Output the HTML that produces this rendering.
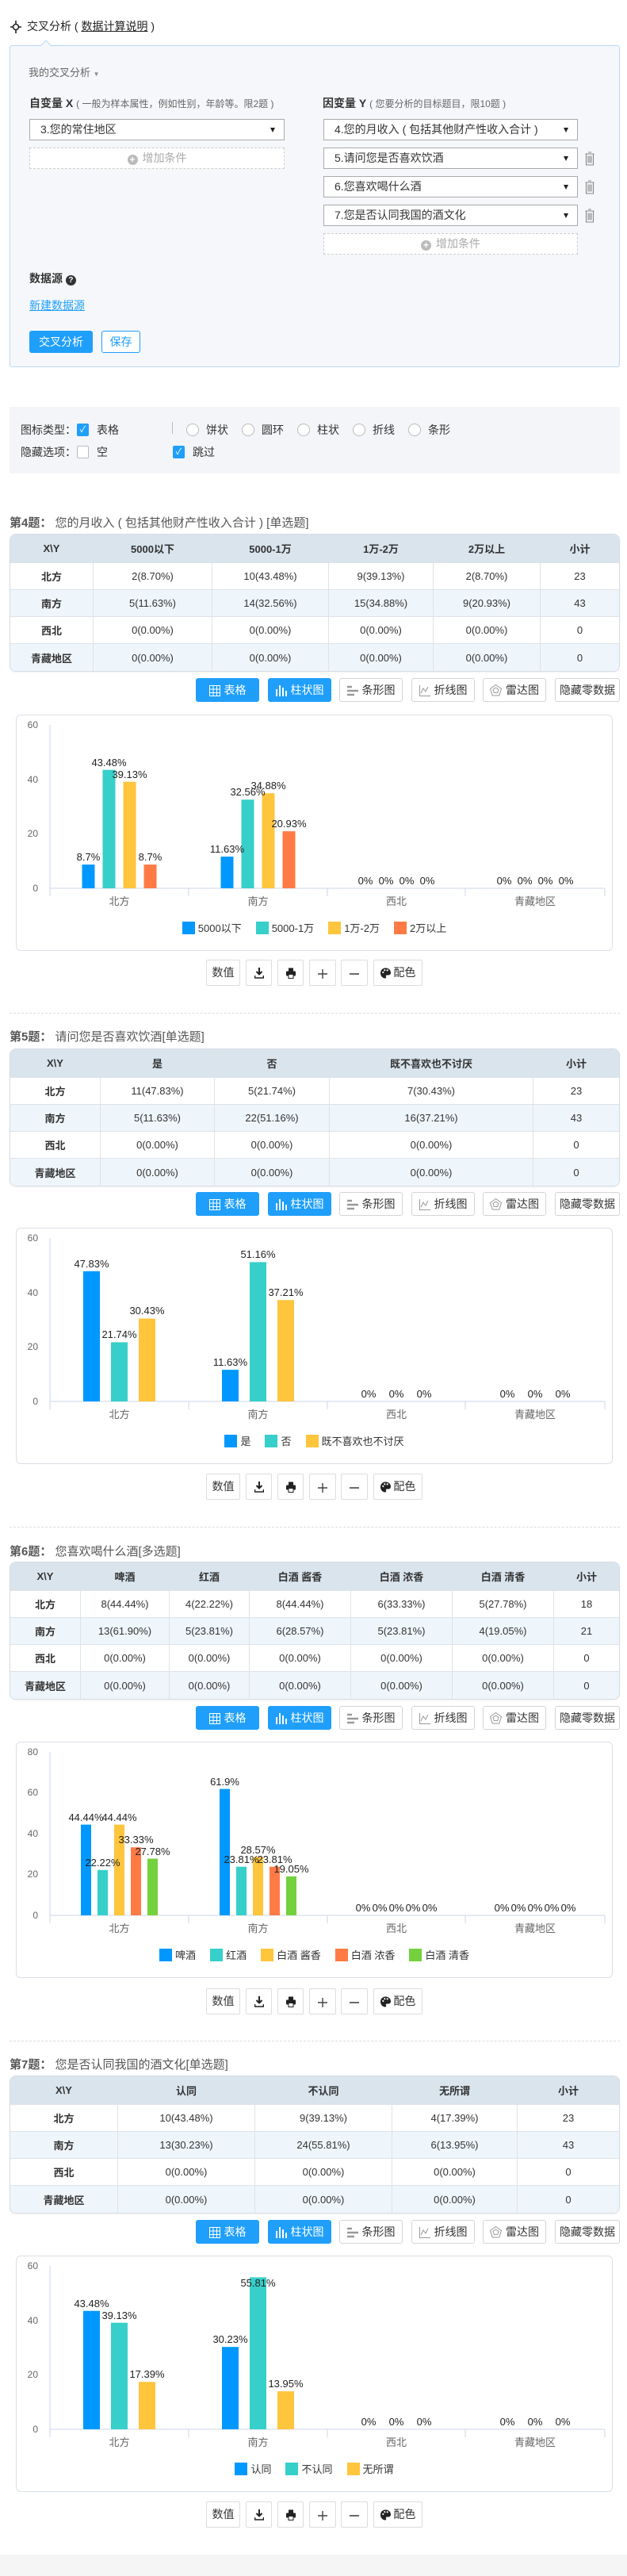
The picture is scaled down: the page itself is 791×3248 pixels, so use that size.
<!DOCTYPE html>
<html><head><meta charset="utf-8">
<style>
*{box-sizing:border-box;margin:0;padding:0}
body{width:791px;height:3248px;position:relative;background:#fff;font-family:"Liberation Sans","Noto Sans CJK SC",sans-serif;color:#333;overflow:hidden}
.a{position:absolute}
.lbl{font-size:14px;line-height:20px;white-space:nowrap}
.sel{position:absolute;height:27px;background:#fff;border:1px solid #aaa;font-size:14px;line-height:25px;padding-left:13px;color:#333}
.sel:after{content:"";position:absolute;right:11px;top:10px;border-left:3px solid transparent;border-right:3px solid transparent;border-top:6px solid #222}
.add{position:absolute;height:27px;border:1px dashed #ccc;background:#fff;color:#aaa;font-size:14px;line-height:25px;text-align:center}
.add i{display:inline-block;width:13px;height:13px;border-radius:50%;background:#bbb;color:#fff;font-style:normal;font-size:12px;line-height:13px;vertical-align:-1px;margin-right:6px;font-weight:bold}
.trash{position:absolute;width:12px;height:18px}
.qt{position:absolute;left:12px;font-size:15px;line-height:20px;color:#555;white-space:nowrap}
.qt b{color:#555}
table.t{position:absolute;left:12px;width:770px;border-collapse:separate;border-spacing:0;border:1px solid #d6dde4;border-radius:8px;overflow:hidden;font-size:13px;table-layout:fixed;box-shadow:0 1px 2px rgba(0,0,0,.06)}
table.t td,table.t th{text-align:center;border-right:1px solid #dde3e9;border-bottom:1px solid #dde3e9;color:#333;white-space:nowrap}
table.t th{height:36px;background:#d9e4ed;font-weight:bold}
table.t td{height:34px;background:#fff}
table.t tr:nth-child(3) td,table.t tr:nth-child(5) td{background:#eef5fb}
table.t td:first-child{font-weight:bold}
table.t tr td:last-child,table.t tr th:last-child{border-right:none}
table.t tr:last-child td{border-bottom:none}
.vb{position:absolute;height:30px;width:80px;border-radius:3px;font-size:14px;line-height:28px;text-align:center;border:1px solid #d4d4d4;background:#fff;color:#333;white-space:nowrap}
.vb.on{background:#1f9ffa;border-color:#1f9ffa;color:#fff}
.vb svg{vertical-align:-3px;margin-right:5px}
.cb{position:absolute;left:20px;width:753px;height:298px;border:1px solid #dcdfe6;border-radius:6px;background:#fff}
.cb svg{position:absolute;left:0;top:0}
.lg{position:absolute;left:0;right:0;top:258px;text-align:center;font-size:13px;color:#333;white-space:nowrap}
.lg span{display:inline-block;margin:0 9px}
.lg i{display:inline-block;width:16px;height:16px;vertical-align:-3px;margin-right:4px}
.tb{position:absolute;height:33px;border:1px solid #ddd;border-radius:2px;background:#fff;font-size:14px;line-height:31px;text-align:center;color:#333}
.tb svg{vertical-align:-3px}
.sep{position:absolute;left:12px;width:770px;border-top:1px dashed #dcdcdc}
</style></head><body>

<svg class="a" style="left:12px;top:25px" width="16" height="18" viewBox="0 0 16 18"><circle cx="8" cy="9" r="3.5" fill="none" stroke="#222" stroke-width="1.6"/><path d="M8 1v4.5M8 12.5V17M1 9h3.5M11.5 9H15" stroke="#222" stroke-width="1.6"/></svg>
<div class="a lbl" style="left:34px;top:23px;font-size:14px;color:#222">交叉分析 ( <u>数据计算说明</u> )</div>

<div class="a" style="left:12px;top:57px;width:770px;height:406px;background:#f5f7fa;border:1px solid #bcd8f5;border-radius:3px"></div>
<svg class="a" style="left:51px;top:50px" width="14" height="8"><path d="M0 8L7 1L14 8" fill="#f5f7fa" stroke="#bcd8f5"/></svg>
<div class="a lbl" style="left:36px;top:82px;font-size:13px;color:#666">我的交叉分析 <span style="font-size:8px;color:#888">▼</span></div>
<div class="a lbl" style="left:37px;top:120px"><b>自变量 X</b> <span style="font-size:12px;color:#666">( 一般为样本属性，例如性别，年龄等。限2题 )</span></div>
<div class="a lbl" style="left:407px;top:120px"><b>因变量 Y</b> <span style="font-size:12px;color:#666">( 您要分析的目标题目，限10题 )</span></div>
<div class="sel" style="left:37px;top:150px;width:322px">3.您的常住地区</div>
<div class="add" style="left:37px;top:186px;width:322px"><i>+</i>增加条件</div>
<div class="sel" style="left:408px;top:150px;width:321px">4.您的月收入 ( 包括其他财产性收入合计 )</div>
<div class="sel" style="left:408px;top:186px;width:321px">5.请问您是否喜欢饮酒</div>
<div class="sel" style="left:408px;top:222px;width:321px">6.您喜欢喝什么酒</div>
<div class="sel" style="left:408px;top:258px;width:321px">7.您是否认同我国的酒文化</div>
<div class="add" style="left:408px;top:294px;width:321px"><i>+</i>增加条件</div>
<svg class="trash" style="left:738px;top:191px" viewBox="0 0 12 18"><path d="M4 1h4M0.5 3h11M1.5 3v14h9V3M4 5.5v9M6 5.5v9M8 5.5v9" fill="none" stroke="#888" stroke-width="1.1"/></svg>
<svg class="trash" style="left:738px;top:227px" viewBox="0 0 12 18"><path d="M4 1h4M0.5 3h11M1.5 3v14h9V3M4 5.5v9M6 5.5v9M8 5.5v9" fill="none" stroke="#888" stroke-width="1.1"/></svg>
<svg class="trash" style="left:738px;top:263px" viewBox="0 0 12 18"><path d="M4 1h4M0.5 3h11M1.5 3v14h9V3M4 5.5v9M6 5.5v9M8 5.5v9" fill="none" stroke="#888" stroke-width="1.1"/></svg>
<div class="a lbl" style="left:37px;top:341px;font-weight:bold">数据源 <span style="display:inline-block;width:13px;height:13px;border-radius:50%;background:#333;color:#fff;font-size:10px;line-height:13px;text-align:center;vertical-align:0">?</span></div>
<div class="a lbl" style="left:37px;top:375px;color:#1e9fff;text-decoration:underline">新建数据源</div>
<div class="a" style="left:37px;top:417px;width:80px;height:28px;background:#1f9ffa;border-radius:3px;color:#fff;font-size:14px;line-height:28px;text-align:center">交叉分析</div>
<div class="a" style="left:128px;top:417px;width:49px;height:28px;background:#fff;border:1px solid #1f9ffa;border-radius:3px;color:#1f9ffa;font-size:14px;line-height:26px;text-align:center">保存</div>

<div class="a" style="left:12px;top:513px;width:770px;height:84px;background:#f4f5f8"></div>
<div class="a lbl" style="left:26px;top:532px">图标类型：</div>
<div class="a" style="left:97px;top:534px;width:15px;height:16px;background:#1f9ffa;border-radius:2px;color:#fff;font-size:11px;line-height:16px;text-align:center">✓</div>
<div class="a lbl" style="left:122px;top:532px">表格</div>
<div class="a" style="left:217px;top:532px;width:1px;height:15px;background:#bbb"></div>
<div class="a" style="left:235px;top:534px;width:16px;height:16px;border:1px solid #bbb;border-radius:50%;background:#fff"></div><div class="a lbl" style="left:260px;top:532px">饼状</div>
<div class="a" style="left:305px;top:534px;width:16px;height:16px;border:1px solid #bbb;border-radius:50%;background:#fff"></div><div class="a lbl" style="left:330px;top:532px">圆环</div>
<div class="a" style="left:375px;top:534px;width:16px;height:16px;border:1px solid #bbb;border-radius:50%;background:#fff"></div><div class="a lbl" style="left:400px;top:532px">柱状</div>
<div class="a" style="left:445px;top:534px;width:16px;height:16px;border:1px solid #bbb;border-radius:50%;background:#fff"></div><div class="a lbl" style="left:470px;top:532px">折线</div>
<div class="a" style="left:515px;top:534px;width:16px;height:16px;border:1px solid #bbb;border-radius:50%;background:#fff"></div><div class="a lbl" style="left:540px;top:532px">条形</div>
<div class="a lbl" style="left:26px;top:560px">隐藏选项：</div>
<div class="a" style="left:97px;top:562px;width:15px;height:16px;border:1px solid #bbb;border-radius:2px;background:#fff"></div>
<div class="a lbl" style="left:122px;top:560px">空</div>
<div class="a" style="left:218px;top:562px;width:15px;height:16px;background:#1f9ffa;border-radius:2px;color:#fff;font-size:11px;line-height:16px;text-align:center">✓</div>
<div class="a lbl" style="left:243px;top:560px">跳过</div>

<!-- Q4 -->
<div class="qt" style="top:650px"><b>第4题：</b> 您的月收入 ( 包括其他财产性收入合计 ) [单选题]</div>
<table class="t" style="top:673px">
<colgroup><col style="width:105px"><col style="width:150px"><col style="width:147px"><col style="width:132px"><col style="width:135px"><col></colgroup>
<tr><th>X\Y</th><th>5000以下</th><th>5000-1万</th><th>1万-2万</th><th>2万以上</th><th>小计</th></tr>
<tr><td>北方</td><td>2(8.70%)</td><td>10(43.48%)</td><td>9(39.13%)</td><td>2(8.70%)</td><td>23</td></tr>
<tr><td>南方</td><td>5(11.63%)</td><td>14(32.56%)</td><td>15(34.88%)</td><td>9(20.93%)</td><td>43</td></tr>
<tr><td>西北</td><td>0(0.00%)</td><td>0(0.00%)</td><td>0(0.00%)</td><td>0(0.00%)</td><td>0</td></tr>
<tr><td>青藏地区</td><td>0(0.00%)</td><td>0(0.00%)</td><td>0(0.00%)</td><td>0(0.00%)</td><td>0</td></tr>
</table>
<div class="vb on" style="left:247px;top:855px"><svg width="14" height="14" viewBox="0 0 14 14"><path d="M0.5 0.5h13v13H0.5zM0.5 5h13M0.5 9.5h13M5 0.5v13M9.5 0.5v13" fill="none" stroke="#fff"/></svg>表格</div>
<div class="vb on" style="left:338px;top:855px"><svg width="14" height="16" viewBox="0 0 14 16"><path d="M1 7v9M5 2v14M9 5v11M13 9v7" stroke="#fff" stroke-width="2"/></svg>柱状图</div>
<div class="vb" style="left:428px;top:855px"><svg width="14" height="14" viewBox="0 0 14 14"><path d="M0 2h6M0 7h14M0 12h9" stroke="#999" stroke-width="2.5"/></svg>条形图</div>
<div class="vb" style="left:519px;top:855px"><svg width="14" height="14" viewBox="0 0 14 14"><path d="M0.5 0v13.5H14M2 10l3-6 3 4 3-6" fill="none" stroke="#999"/></svg>折线图</div>
<div class="vb" style="left:609px;top:855px"><svg width="15" height="15" viewBox="0 0 15 15"><path d="M7.5 0.5l7 5-2.7 8.5H3.2L0.5 5.5zM7.5 4l3.5 2.5-1.3 4H5.3L4 6.5z" fill="none" stroke="#999"/></svg>雷达图</div>
<div class="vb" style="left:700px;top:855px;width:82px">隐藏零数据</div>

<div class="cb" style="top:901px">
<svg width="753" height="298" font-family="Liberation Sans, Noto Sans CJK SC, sans-serif">
<g font-size="12" fill="#666" text-anchor="end"><text x="27" y="222">0</text><text x="27" y="153">20</text><text x="27" y="85">40</text><text x="27" y="16">60</text></g>
<path d="M42 12V218M42 218H742M42 218v10M217 218v10M392 218v10M566 218v10M742 218v10" stroke="#ccd6eb" fill="none"/>
<g fill="#0098ff"><rect x="82.5" y="188.1" width="16" height="29.9"/><rect x="257.5" y="178.1" width="16" height="39.9"/></g>
<g fill="#36cfc9"><rect x="108.5" y="68.7" width="16" height="149.3"/><rect x="283.5" y="106.2" width="16" height="111.8"/></g>
<g fill="#ffc53d"><rect x="134.5" y="83.7" width="16" height="134.3"/><rect x="309.5" y="98.2" width="16" height="119.8"/></g>
<g fill="#ff7a45"><rect x="160.5" y="188.1" width="16" height="29.9"/><rect x="335.5" y="146.1" width="16" height="71.9"/></g>
<g font-size="13" fill="#222" text-anchor="middle">
<text x="90.5" y="183">8.7%</text><text x="116.5" y="64">43.48%</text><text x="142.5" y="79">39.13%</text><text x="168.5" y="183">8.7%</text>
<text x="265.5" y="173">11.63%</text><text x="291.5" y="101">32.56%</text><text x="317.5" y="93">34.88%</text><text x="343.5" y="141">20.93%</text>
<text x="440" y="213">0%</text><text x="466" y="213">0%</text><text x="492" y="213">0%</text><text x="518" y="213">0%</text>
<text x="615" y="213">0%</text><text x="641" y="213">0%</text><text x="667" y="213">0%</text><text x="693" y="213">0%</text></g>
<g font-size="13" fill="#666" text-anchor="middle"><text x="129.5" y="239">北方</text><text x="304.5" y="239">南方</text><text x="479" y="239">西北</text><text x="654" y="239">青藏地区</text></g>
</svg>
<div class="lg"><span><i style="background:#0098ff"></i>5000以下</span><span><i style="background:#36cfc9"></i>5000-1万</span><span><i style="background:#ffc53d"></i>1万-2万</span><span><i style="background:#ff7a45"></i>2万以上</span></div>
</div>
<div class="tb" style="left:260px;top:1210px;width:43px">数值</div>
<div class="tb" style="left:310px;top:1210px;width:33px"><svg width="12" height="14" viewBox="0 0 12 14"><path d="M6 0v8M2.5 5L6 8.5 9.5 5" fill="none" stroke="#222" stroke-width="2"/><path d="M0.5 10v3h11v-3" fill="none" stroke="#222" stroke-width="1.6"/></svg></div>
<div class="tb" style="left:350px;top:1210px;width:33px"><svg width="12" height="14" viewBox="0 0 12 14"><rect x="3" y="0.5" width="6" height="4" fill="#222"/><rect x="0" y="4.5" width="12" height="6" rx="1" fill="#222"/><rect x="3" y="8.5" width="6" height="5" fill="#fff" stroke="#222"/></svg></div>
<div class="tb" style="left:390px;top:1210px;width:34px"><svg width="12" height="12"><path d="M6 0v12M0 6h12" stroke="#444" stroke-width="1.4"/></svg></div>
<div class="tb" style="left:430px;top:1210px;width:34px"><svg width="12" height="12"><path d="M0 6h12" stroke="#444" stroke-width="1.6"/></svg></div>
<div class="tb" style="left:471px;top:1210px;width:62px"><svg width="13" height="14" viewBox="0 0 13 14"><path d="M6.5 0.5C2.5 0.5 0 3.5 0 7s2.7 6.5 6 6.5c1.2 0 1.5-1 1-2-.6-1.2.2-2 1.5-2H10c1.8 0 3-1.2 3-3C13 3 10.3 0.5 6.5 0.5z" fill="#222"/><circle cx="3.3" cy="6" r="1.1" fill="#fff"/><circle cx="5.3" cy="3.2" r="1.1" fill="#fff"/><circle cx="8.7" cy="3.4" r="1.1" fill="#fff"/></svg> 配色</div>
<div class="sep" style="top:1277px"></div>

<!-- Q5 -->
<div class="qt" style="top:1298px"><b>第5题：</b> 请问您是否喜欢饮酒[单选题]</div>
<table class="t" style="top:1322px">
<colgroup><col style="width:114px"><col style="width:144px"><col style="width:145px"><col style="width:257px"><col></colgroup>
<tr><th>X\Y</th><th>是</th><th>否</th><th>既不喜欢也不讨厌</th><th>小计</th></tr>
<tr><td>北方</td><td>11(47.83%)</td><td>5(21.74%)</td><td>7(30.43%)</td><td>23</td></tr>
<tr><td>南方</td><td>5(11.63%)</td><td>22(51.16%)</td><td>16(37.21%)</td><td>43</td></tr>
<tr><td>西北</td><td>0(0.00%)</td><td>0(0.00%)</td><td>0(0.00%)</td><td>0</td></tr>
<tr><td>青藏地区</td><td>0(0.00%)</td><td>0(0.00%)</td><td>0(0.00%)</td><td>0</td></tr>
</table>
<div class="vb on" style="left:247px;top:1503px"><svg width="14" height="14" viewBox="0 0 14 14"><path d="M0.5 0.5h13v13H0.5zM0.5 5h13M0.5 9.5h13M5 0.5v13M9.5 0.5v13" fill="none" stroke="#fff"/></svg>表格</div>
<div class="vb on" style="left:338px;top:1503px"><svg width="14" height="16" viewBox="0 0 14 16"><path d="M1 7v9M5 2v14M9 5v11M13 9v7" stroke="#fff" stroke-width="2"/></svg>柱状图</div>
<div class="vb" style="left:428px;top:1503px"><svg width="14" height="14" viewBox="0 0 14 14"><path d="M0 2h6M0 7h14M0 12h9" stroke="#999" stroke-width="2.5"/></svg>条形图</div>
<div class="vb" style="left:519px;top:1503px"><svg width="14" height="14" viewBox="0 0 14 14"><path d="M0.5 0v13.5H14M2 10l3-6 3 4 3-6" fill="none" stroke="#999"/></svg>折线图</div>
<div class="vb" style="left:609px;top:1503px"><svg width="15" height="15" viewBox="0 0 15 15"><path d="M7.5 0.5l7 5-2.7 8.5H3.2L0.5 5.5zM7.5 4l3.5 2.5-1.3 4H5.3L4 6.5z" fill="none" stroke="#999"/></svg>雷达图</div>
<div class="vb" style="left:700px;top:1503px;width:82px">隐藏零数据</div>

<div class="cb" style="top:1548px">
<svg width="753" height="298" font-family="Liberation Sans, Noto Sans CJK SC, sans-serif">
<g font-size="12" fill="#666" text-anchor="end"><text x="27" y="222">0</text><text x="27" y="153">20</text><text x="27" y="85">40</text><text x="27" y="16">60</text></g>
<path d="M42 12V218M42 218H742M42 218v10M217 218v10M392 218v10M566 218v10M742 218v10" stroke="#ccd6eb" fill="none"/>
<g fill="#0098ff"><rect x="84" y="53.8" width="21" height="164.2"/><rect x="259" y="178.1" width="21" height="39.9"/></g>
<g fill="#36cfc9"><rect x="119" y="143.4" width="21" height="74.6"/><rect x="294" y="42.4" width="21" height="175.6"/></g>
<g fill="#ffc53d"><rect x="154" y="113.5" width="21" height="104.5"/><rect x="329" y="90.2" width="21" height="127.8"/></g>
<g font-size="13" fill="#222" text-anchor="middle">
<text x="94.5" y="49">47.83%</text><text x="129.5" y="138">21.74%</text><text x="164.5" y="108">30.43%</text>
<text x="269.5" y="173">11.63%</text><text x="304.5" y="37">51.16%</text><text x="339.5" y="85">37.21%</text>
<text x="444" y="213">0%</text><text x="479" y="213">0%</text><text x="514" y="213">0%</text>
<text x="619" y="213">0%</text><text x="654" y="213">0%</text><text x="689" y="213">0%</text></g>
<g font-size="13" fill="#666" text-anchor="middle"><text x="129.5" y="239">北方</text><text x="304.5" y="239">南方</text><text x="479" y="239">西北</text><text x="654" y="239">青藏地区</text></g>
</svg>
<div class="lg"><span><i style="background:#0098ff"></i>是</span><span><i style="background:#36cfc9"></i>否</span><span><i style="background:#ffc53d"></i>既不喜欢也不讨厌</span></div>
</div>
<div class="tb" style="left:260px;top:1858px;width:43px">数值</div>
<div class="tb" style="left:310px;top:1858px;width:33px"><svg width="12" height="14" viewBox="0 0 12 14"><path d="M6 0v8M2.5 5L6 8.5 9.5 5" fill="none" stroke="#222" stroke-width="2"/><path d="M0.5 10v3h11v-3" fill="none" stroke="#222" stroke-width="1.6"/></svg></div>
<div class="tb" style="left:350px;top:1858px;width:33px"><svg width="12" height="14" viewBox="0 0 12 14"><rect x="3" y="0.5" width="6" height="4" fill="#222"/><rect x="0" y="4.5" width="12" height="6" rx="1" fill="#222"/><rect x="3" y="8.5" width="6" height="5" fill="#fff" stroke="#222"/></svg></div>
<div class="tb" style="left:390px;top:1858px;width:34px"><svg width="12" height="12"><path d="M6 0v12M0 6h12" stroke="#444" stroke-width="1.4"/></svg></div>
<div class="tb" style="left:430px;top:1858px;width:34px"><svg width="12" height="12"><path d="M0 6h12" stroke="#444" stroke-width="1.6"/></svg></div>
<div class="tb" style="left:471px;top:1858px;width:62px"><svg width="13" height="14" viewBox="0 0 13 14"><path d="M6.5 0.5C2.5 0.5 0 3.5 0 7s2.7 6.5 6 6.5c1.2 0 1.5-1 1-2-.6-1.2.2-2 1.5-2H10c1.8 0 3-1.2 3-3C13 3 10.3 0.5 6.5 0.5z" fill="#222"/><circle cx="3.3" cy="6" r="1.1" fill="#fff"/><circle cx="5.3" cy="3.2" r="1.1" fill="#fff"/><circle cx="8.7" cy="3.4" r="1.1" fill="#fff"/></svg> 配色</div>
<div class="sep" style="top:1925px"></div>

<!-- Q6 -->
<div class="qt" style="top:1947px"><b>第6题：</b> 您喜欢喝什么酒[多选题]</div>
<table class="t" style="top:1969px">
<colgroup><col style="width:89px"><col style="width:112px"><col style="width:101px"><col style="width:128px"><col style="width:128px"><col style="width:128px"><col></colgroup>
<tr><th>X\Y</th><th>啤酒</th><th>红酒</th><th>白酒 酱香</th><th>白酒 浓香</th><th>白酒 清香</th><th>小计</th></tr>
<tr><td>北方</td><td>8(44.44%)</td><td>4(22.22%)</td><td>8(44.44%)</td><td>6(33.33%)</td><td>5(27.78%)</td><td>18</td></tr>
<tr><td>南方</td><td>13(61.90%)</td><td>5(23.81%)</td><td>6(28.57%)</td><td>5(23.81%)</td><td>4(19.05%)</td><td>21</td></tr>
<tr><td>西北</td><td>0(0.00%)</td><td>0(0.00%)</td><td>0(0.00%)</td><td>0(0.00%)</td><td>0(0.00%)</td><td>0</td></tr>
<tr><td>青藏地区</td><td>0(0.00%)</td><td>0(0.00%)</td><td>0(0.00%)</td><td>0(0.00%)</td><td>0(0.00%)</td><td>0</td></tr>
</table>
<div class="vb on" style="left:247px;top:2151px"><svg width="14" height="14" viewBox="0 0 14 14"><path d="M0.5 0.5h13v13H0.5zM0.5 5h13M0.5 9.5h13M5 0.5v13M9.5 0.5v13" fill="none" stroke="#fff"/></svg>表格</div>
<div class="vb on" style="left:338px;top:2151px"><svg width="14" height="16" viewBox="0 0 14 16"><path d="M1 7v9M5 2v14M9 5v11M13 9v7" stroke="#fff" stroke-width="2"/></svg>柱状图</div>
<div class="vb" style="left:428px;top:2151px"><svg width="14" height="14" viewBox="0 0 14 14"><path d="M0 2h6M0 7h14M0 12h9" stroke="#999" stroke-width="2.5"/></svg>条形图</div>
<div class="vb" style="left:519px;top:2151px"><svg width="14" height="14" viewBox="0 0 14 14"><path d="M0.5 0v13.5H14M2 10l3-6 3 4 3-6" fill="none" stroke="#999"/></svg>折线图</div>
<div class="vb" style="left:609px;top:2151px"><svg width="15" height="15" viewBox="0 0 15 15"><path d="M7.5 0.5l7 5-2.7 8.5H3.2L0.5 5.5zM7.5 4l3.5 2.5-1.3 4H5.3L4 6.5z" fill="none" stroke="#999"/></svg>雷达图</div>
<div class="vb" style="left:700px;top:2151px;width:82px">隐藏零数据</div>

<div class="cb" style="top:2196px">
<svg width="753" height="298" font-family="Liberation Sans, Noto Sans CJK SC, sans-serif">
<g font-size="12" fill="#666" text-anchor="end"><text x="27" y="222">0</text><text x="27" y="170">20</text><text x="27" y="119">40</text><text x="27" y="67">60</text><text x="27" y="16">80</text></g>
<path d="M42 12V218M42 218H742M42 218v10M217 218v10M392 218v10M566 218v10M742 218v10" stroke="#ccd6eb" fill="none"/>
<g fill="#0098ff"><rect x="81" y="103.6" width="13" height="114.4"/><rect x="256" y="58.6" width="13" height="159.4"/></g>
<g fill="#36cfc9"><rect x="102" y="160.8" width="13" height="57.2"/><rect x="277" y="156.7" width="13" height="61.3"/></g>
<g fill="#ffc53d"><rect x="123" y="103.6" width="13" height="114.4"/><rect x="298" y="144.4" width="13" height="73.6"/></g>
<g fill="#ff7a45"><rect x="144" y="132.2" width="13" height="85.8"/><rect x="319" y="156.7" width="13" height="61.3"/></g>
<g fill="#73d13d"><rect x="165" y="146.5" width="13" height="71.5"/><rect x="340" y="168.9" width="13" height="49.1"/></g>
<g font-size="13" fill="#222" text-anchor="middle">
<text x="87.5" y="99">44.44%</text><text x="108.5" y="156">22.22%</text><text x="129.5" y="99">44.44%</text><text x="150.5" y="127">33.33%</text><text x="171.5" y="142">27.78%</text>
<text x="262.5" y="54">61.9%</text><text x="283.5" y="152">23.81%</text><text x="304.5" y="140">28.57%</text><text x="325.5" y="152">23.81%</text><text x="346.5" y="164">19.05%</text>
<text x="437" y="213">0%</text><text x="458" y="213">0%</text><text x="479" y="213">0%</text><text x="500" y="213">0%</text><text x="521" y="213">0%</text>
<text x="612" y="213">0%</text><text x="633" y="213">0%</text><text x="654" y="213">0%</text><text x="675" y="213">0%</text><text x="696" y="213">0%</text></g>
<g font-size="13" fill="#666" text-anchor="middle"><text x="129.5" y="239">北方</text><text x="304.5" y="239">南方</text><text x="479" y="239">西北</text><text x="654" y="239">青藏地区</text></g>
</svg>
<div class="lg"><span><i style="background:#0098ff"></i>啤酒</span><span><i style="background:#36cfc9"></i>红酒</span><span><i style="background:#ffc53d"></i>白酒 酱香</span><span><i style="background:#ff7a45"></i>白酒 浓香</span><span><i style="background:#73d13d"></i>白酒 清香</span></div>
</div>
<div class="tb" style="left:260px;top:2507px;width:43px">数值</div>
<div class="tb" style="left:310px;top:2507px;width:33px"><svg width="12" height="14" viewBox="0 0 12 14"><path d="M6 0v8M2.5 5L6 8.5 9.5 5" fill="none" stroke="#222" stroke-width="2"/><path d="M0.5 10v3h11v-3" fill="none" stroke="#222" stroke-width="1.6"/></svg></div>
<div class="tb" style="left:350px;top:2507px;width:33px"><svg width="12" height="14" viewBox="0 0 12 14"><rect x="3" y="0.5" width="6" height="4" fill="#222"/><rect x="0" y="4.5" width="12" height="6" rx="1" fill="#222"/><rect x="3" y="8.5" width="6" height="5" fill="#fff" stroke="#222"/></svg></div>
<div class="tb" style="left:390px;top:2507px;width:34px"><svg width="12" height="12"><path d="M6 0v12M0 6h12" stroke="#444" stroke-width="1.4"/></svg></div>
<div class="tb" style="left:430px;top:2507px;width:34px"><svg width="12" height="12"><path d="M0 6h12" stroke="#444" stroke-width="1.6"/></svg></div>
<div class="tb" style="left:471px;top:2507px;width:62px"><svg width="13" height="14" viewBox="0 0 13 14"><path d="M6.5 0.5C2.5 0.5 0 3.5 0 7s2.7 6.5 6 6.5c1.2 0 1.5-1 1-2-.6-1.2.2-2 1.5-2H10c1.8 0 3-1.2 3-3C13 3 10.3 0.5 6.5 0.5z" fill="#222"/><circle cx="3.3" cy="6" r="1.1" fill="#fff"/><circle cx="5.3" cy="3.2" r="1.1" fill="#fff"/><circle cx="8.7" cy="3.4" r="1.1" fill="#fff"/></svg> 配色</div>
<div class="sep" style="top:2573px"></div>

<!-- Q7 -->
<div class="qt" style="top:2594px"><b>第7题：</b> 您是否认同我国的酒文化[单选题]</div>
<table class="t" style="top:2617px">
<colgroup><col style="width:136px"><col style="width:173px"><col style="width:173px"><col style="width:158px"><col></colgroup>
<tr><th>X\Y</th><th>认同</th><th>不认同</th><th>无所谓</th><th>小计</th></tr>
<tr><td>北方</td><td>10(43.48%)</td><td>9(39.13%)</td><td>4(17.39%)</td><td>23</td></tr>
<tr><td>南方</td><td>13(30.23%)</td><td>24(55.81%)</td><td>6(13.95%)</td><td>43</td></tr>
<tr><td>西北</td><td>0(0.00%)</td><td>0(0.00%)</td><td>0(0.00%)</td><td>0</td></tr>
<tr><td>青藏地区</td><td>0(0.00%)</td><td>0(0.00%)</td><td>0(0.00%)</td><td>0</td></tr>
</table>
<div class="vb on" style="left:247px;top:2799px"><svg width="14" height="14" viewBox="0 0 14 14"><path d="M0.5 0.5h13v13H0.5zM0.5 5h13M0.5 9.5h13M5 0.5v13M9.5 0.5v13" fill="none" stroke="#fff"/></svg>表格</div>
<div class="vb on" style="left:338px;top:2799px"><svg width="14" height="16" viewBox="0 0 14 16"><path d="M1 7v9M5 2v14M9 5v11M13 9v7" stroke="#fff" stroke-width="2"/></svg>柱状图</div>
<div class="vb" style="left:428px;top:2799px"><svg width="14" height="14" viewBox="0 0 14 14"><path d="M0 2h6M0 7h14M0 12h9" stroke="#999" stroke-width="2.5"/></svg>条形图</div>
<div class="vb" style="left:519px;top:2799px"><svg width="14" height="14" viewBox="0 0 14 14"><path d="M0.5 0v13.5H14M2 10l3-6 3 4 3-6" fill="none" stroke="#999"/></svg>折线图</div>
<div class="vb" style="left:609px;top:2799px"><svg width="15" height="15" viewBox="0 0 15 15"><path d="M7.5 0.5l7 5-2.7 8.5H3.2L0.5 5.5zM7.5 4l3.5 2.5-1.3 4H5.3L4 6.5z" fill="none" stroke="#999"/></svg>雷达图</div>
<div class="vb" style="left:700px;top:2799px;width:82px">隐藏零数据</div>

<div class="cb" style="top:2844px">
<svg width="753" height="298" font-family="Liberation Sans, Noto Sans CJK SC, sans-serif">
<g font-size="12" fill="#666" text-anchor="end"><text x="27" y="222">0</text><text x="27" y="153">20</text><text x="27" y="85">40</text><text x="27" y="16">60</text></g>
<path d="M42 12V218M42 218H742M42 218v10M217 218v10M392 218v10M566 218v10M742 218v10" stroke="#ccd6eb" fill="none"/>
<g fill="#0098ff"><rect x="84" y="68.7" width="21" height="149.3"/><rect x="259" y="114.2" width="21" height="103.8"/></g>
<g fill="#36cfc9"><rect x="119" y="83.7" width="21" height="134.3"/><rect x="294" y="26.4" width="21" height="191.6"/></g>
<g fill="#ffc53d"><rect x="154" y="158.3" width="21" height="59.7"/><rect x="329" y="170.1" width="21" height="47.9"/></g>
<g font-size="13" fill="#222" text-anchor="middle">
<text x="94.5" y="64">43.48%</text><text x="129.5" y="79">39.13%</text><text x="164.5" y="153">17.39%</text>
<text x="269.5" y="109">30.23%</text><text x="304.5" y="38">55.81%</text><text x="339.5" y="165">13.95%</text>
<text x="444" y="213">0%</text><text x="479" y="213">0%</text><text x="514" y="213">0%</text>
<text x="619" y="213">0%</text><text x="654" y="213">0%</text><text x="689" y="213">0%</text></g>
<g font-size="13" fill="#666" text-anchor="middle"><text x="129.5" y="239">北方</text><text x="304.5" y="239">南方</text><text x="479" y="239">西北</text><text x="654" y="239">青藏地区</text></g>
</svg>
<div class="lg"><span><i style="background:#0098ff"></i>认同</span><span><i style="background:#36cfc9"></i>不认同</span><span><i style="background:#ffc53d"></i>无所谓</span></div>
</div>
<div class="tb" style="left:260px;top:3154px;width:43px">数值</div>
<div class="tb" style="left:310px;top:3154px;width:33px"><svg width="12" height="14" viewBox="0 0 12 14"><path d="M6 0v8M2.5 5L6 8.5 9.5 5" fill="none" stroke="#222" stroke-width="2"/><path d="M0.5 10v3h11v-3" fill="none" stroke="#222" stroke-width="1.6"/></svg></div>
<div class="tb" style="left:350px;top:3154px;width:33px"><svg width="12" height="14" viewBox="0 0 12 14"><rect x="3" y="0.5" width="6" height="4" fill="#222"/><rect x="0" y="4.5" width="12" height="6" rx="1" fill="#222"/><rect x="3" y="8.5" width="6" height="5" fill="#fff" stroke="#222"/></svg></div>
<div class="tb" style="left:390px;top:3154px;width:34px"><svg width="12" height="12"><path d="M6 0v12M0 6h12" stroke="#444" stroke-width="1.4"/></svg></div>
<div class="tb" style="left:430px;top:3154px;width:34px"><svg width="12" height="12"><path d="M0 6h12" stroke="#444" stroke-width="1.6"/></svg></div>
<div class="tb" style="left:471px;top:3154px;width:62px"><svg width="13" height="14" viewBox="0 0 13 14"><path d="M6.5 0.5C2.5 0.5 0 3.5 0 7s2.7 6.5 6 6.5c1.2 0 1.5-1 1-2-.6-1.2.2-2 1.5-2H10c1.8 0 3-1.2 3-3C13 3 10.3 0.5 6.5 0.5z" fill="#222"/><circle cx="3.3" cy="6" r="1.1" fill="#fff"/><circle cx="5.3" cy="3.2" r="1.1" fill="#fff"/><circle cx="8.7" cy="3.4" r="1.1" fill="#fff"/></svg> 配色</div>

<div class="a" style="left:0;top:3221px;width:791px;height:27px;background:#f5f5f5"></div>
</body></html>
